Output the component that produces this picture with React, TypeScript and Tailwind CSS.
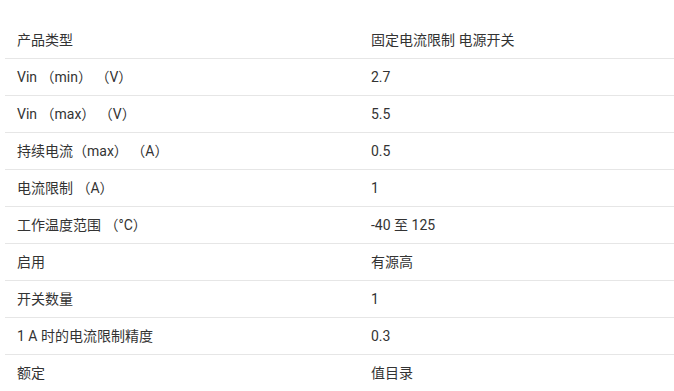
import React from 'react';

const rows: [string, string][] = [
  ['产品类型', '固定电流限制 电源开关'],
  ['Vin （min） （V）', '2.7'],
  ['Vin （max） （V）', '5.5'],
  ['持续电流（max） （A）', '0.5'],
  ['电流限制 （A）', '1'],
  ['工作温度范围 （°C）', '-40 至 125'],
  ['启用', '有源高'],
  ['开关数量', '1'],
  ['1 A 时的电流限制精度', '0.3'],
  ['额定', '值目录'],
];

const App = () => {
  return (
    <div
      className="w-[674px] h-[391px] overflow-hidden bg-white pt-[22px] pl-[5px] text-[14px] text-[#333333]"
      style={{ fontFamily: 'Roboto, "Noto Sans CJK SC", sans-serif' }}
    >
      <div className="w-[720px]">
        {rows.map(([label, value], i) => (
          <div
            key={i}
            className="grid grid-cols-[354px_1fr] h-[37px] items-center border-b border-[#e6e6e6]"
          >
            <div className="pl-3 whitespace-pre">{label}</div>
            <div className="pl-3">{value}</div>
          </div>
        ))}
      </div>
    </div>
  );
};

export default App;
